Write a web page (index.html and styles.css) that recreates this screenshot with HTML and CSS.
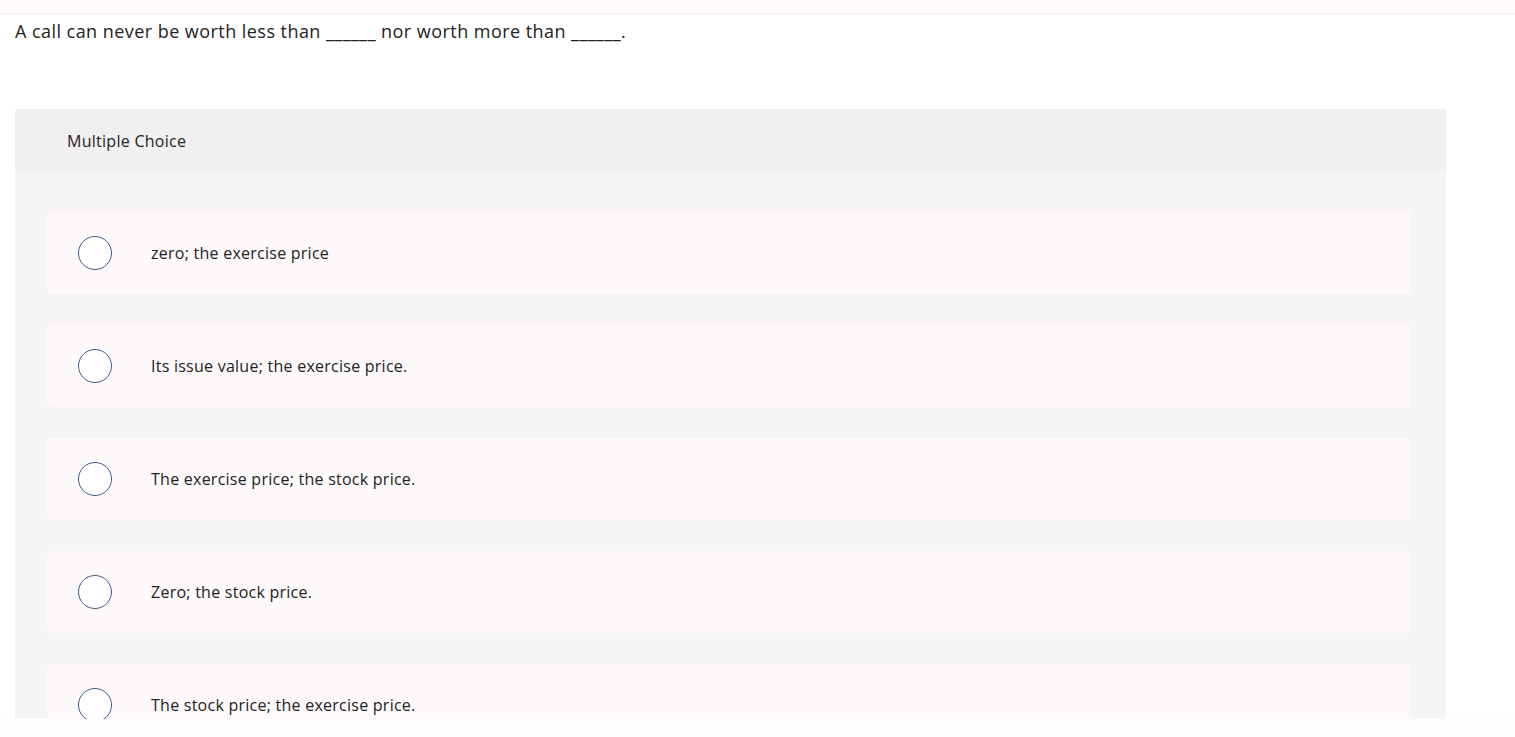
FILE: index.html
```html
<!DOCTYPE html>
<html>
<head>
<meta charset="utf-8">
<link rel="stylesheet" href="styles.css">
</head>
<body>
<div class="viewport">
  <div class="topbar"></div>
  <p class="question">A call can never be worth less than ______ nor worth more than ______.</p>
  <section class="panel">
    <div class="panel-head">Multiple Choice</div>
    <div class="panel-body">
      <label class="option"><span class="radio"></span><span class="label">zero; the exercise price</span></label>
      <label class="option"><span class="radio"></span><span class="label">Its issue value; the exercise price.</span></label>
      <label class="option"><span class="radio"></span><span class="label">The exercise price; the stock price.</span></label>
      <label class="option"><span class="radio"></span><span class="label">Zero; the stock price.</span></label>
      <label class="option"><span class="radio"></span><span class="label">The stock price; the exercise price.</span></label>
    </div>
  </section>
</div>
</body>
</html>
```
FILE: styles.css
```css
html, body {
  margin: 0;
  padding: 0;
  background: #fffcfc;
}
body {
  font-family: "Open Sans", "Liberation Sans", Arial, sans-serif;
  color: #222;
}
.viewport {
  height: 719px;
  overflow: hidden;
  background: #ffffff;
}
.topbar {
  height: 13px;
  background: #fffafa;
  border-bottom: 1px solid #f3eced;
}
.question {
  margin: 0;
  padding: 5px 0 0 15px;
  font-size: 18px;
  line-height: 24px;
  letter-spacing: 0.45px;
  color: #222;
}
.panel {
  margin: 66px 0 0 15px;
  width: 1431px;
  border-radius: 4px 4px 0 0;
  overflow: hidden;
  background: #f7f4f5;
}
.panel-head {
  height: 63px;
  display: flex;
  align-items: center;
  padding-left: 52px;
  background: #f2eff0;
  font-size: 16px;
  letter-spacing: 0.27px;
  color: #222;
}
.panel-body {
  padding: 40px 35px 40px 32px;
  display: flex;
  flex-direction: column;
  gap: 31px;
}
.option {
  height: 82px;
  display: flex;
  align-items: center;
  background: #fdf9fa;
  border-radius: 4px;
  padding-left: 31px;
}
.radio {
  width: 32px;
  height: 32px;
  border: 1.5px solid #3e5b85;
  border-radius: 50%;
  background: #fff;
  flex: none;
}
.label {
  margin-left: 39px;
  font-size: 16px;
  letter-spacing: 0.25px;
  color: #222;
}
```
